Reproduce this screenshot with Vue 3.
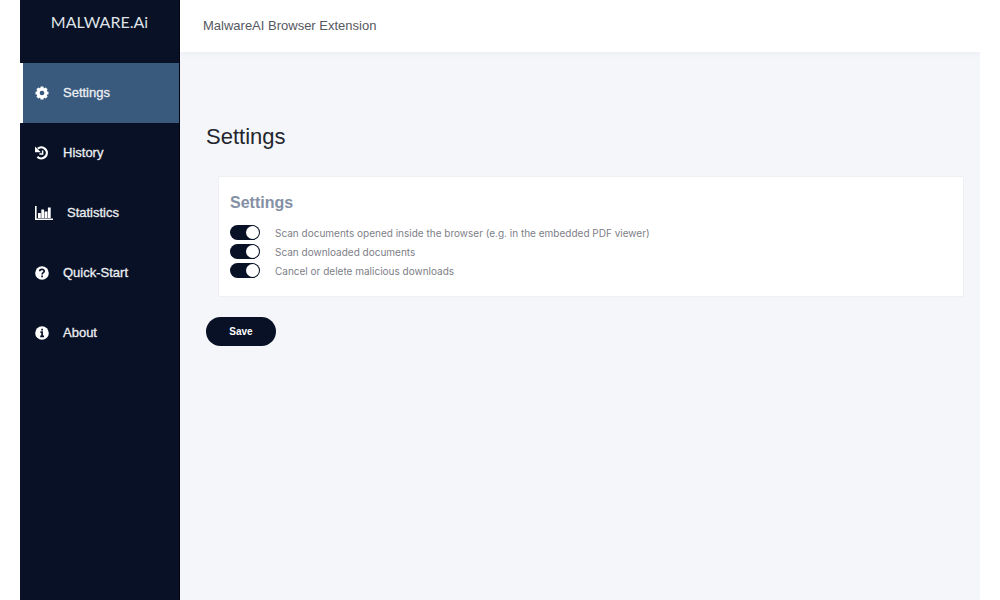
<script setup>
import { ref } from 'vue'

const items = [
  { id: 'settings', label: 'Settings' },
  { id: 'history', label: 'History' },
  { id: 'statistics', label: 'Statistics' },
  { id: 'quick-start', label: 'Quick-Start' },
  { id: 'about', label: 'About' },
]
const active = ref('settings')

const options = ref([
  { id: 'scan-opened', label: 'Scan documents opened inside the browser (e.g. in the embedded PDF viewer)', on: true },
  { id: 'scan-downloaded', label: 'Scan downloaded documents', on: true },
  { id: 'cancel-malicious', label: 'Cancel or delete malicious downloads', on: true },
])
</script>

<template>
  <div class="page">
    <aside class="sidebar">
      <div class="brand">MALWARE.Ai</div>
      <nav class="nav">
        <a
          v-for="item in items"
          :key="item.id"
          :href="'#' + item.id"
          class="nav-link"
          :class="{ active: active === item.id }"
          @click="active = item.id"
        >
          <svg v-if="item.id === 'settings'" class="icon" viewBox="0 0 14 14" aria-hidden="true">
            <g fill="currentColor">
              <rect v-for="n in 4" :key="n" x="5.4" y="0.5" width="3.2" height="13" rx="0.6" :transform="`rotate(${n * 45} 7 7)`" />
              <circle cx="7" cy="7" r="5.3" />
            </g>
            <circle class="hole" cx="7" cy="7" r="2.3" />
          </svg>
          <svg v-else-if="item.id === 'history'" class="icon" viewBox="0 0 14 14" aria-hidden="true">
            <path d="M2.8 2.7A5.5 5.5 0 1 1 2.4 10.8" fill="none" stroke="currentColor" stroke-width="2.3" />
            <path d="M0 0.4V6.2H5.8Z" fill="currentColor" />
            <path d="M7.6 4.6V8H4.4" fill="none" stroke="currentColor" stroke-width="1.5" />
          </svg>
          <svg v-else-if="item.id === 'statistics'" class="icon wide" viewBox="0 0 18 14" aria-hidden="true">
            <path d="M0.8 0V13.2H18" fill="none" stroke="currentColor" stroke-width="1.6" />
            <path d="M3 7h2.8v5H3zM6.3 3.5h2.8V12H6.3zM9.6 5.5h2.8V12H9.6zM12.9 1.5h2.8V12h-2.8z" fill="currentColor" />
          </svg>
          <svg v-else-if="item.id === 'quick-start'" class="icon" viewBox="0 0 14 14" aria-hidden="true">
            <circle cx="7" cy="7" r="6.8" fill="currentColor" />
            <path class="cut" d="M4.7 5.2C4.8 2.8 9.4 2.9 9.2 5.3C9.1 6.7 7.1 6.7 7.1 8.4" />
            <path class="cut" d="M7.1 9.5V11.3" />
          </svg>
          <svg v-else class="icon" viewBox="0 0 14 14" aria-hidden="true">
            <circle cx="7" cy="7" r="6.8" fill="currentColor" />
            <path class="cut" d="M7.1 2.7V4.5M5.4 6.2H7.1V10.4M5.2 10.4H9" />
          </svg>
          <span>{{ item.label }}</span>
        </a>
      </nav>
    </aside>

    <div class="body">
      <header class="topbar">MalwareAI Browser Extension</header>
      <main class="content">
        <h1>Settings</h1>
        <form @submit.prevent>
          <section class="card">
            <h2>Settings</h2>
            <div v-for="option in options" :key="option.id" class="option">
              <input :id="option.id" v-model="option.on" class="switch" type="checkbox" />
              <label :for="option.id">{{ option.label }}</label>
            </div>
          </section>
          <button class="save" type="submit">Save</button>
        </form>
      </main>
    </div>
  </div>
</template>

<style>
body {
  background: #fff;
}
</style>

<style scoped>
.page {
  display: flex;
  min-height: 100vh;
  margin: 0 20px;
  font-family: "Liberation Sans", Arial, sans-serif;
  background: #f5f6fa;
}

.sidebar {
  flex: none;
  width: 160px;
  box-sizing: border-box;
  border-right: 1px solid #03060f;
  background: #081125;
  color: #fff;
}

.brand {
  height: 63px;
  padding-top: 12px;
  box-sizing: border-box;
  font: 16px/20px Lato, sans-serif;
  text-align: center;
  color: #dfe1e6;
}

.nav-link {
  display: flex;
  align-items: center;
  gap: 14px;
  height: 60px;
  padding-left: 15px;
  font-size: 13px;
  line-height: 20px;
  -webkit-text-stroke: 0.3px currentColor;
  color: #eceef2;
  text-decoration: none;
}

.nav-link.active {
  padding-left: 12px;
  border-left: 3px solid #fff;
  background: #395a7d;
}

.icon {
  flex: none;
  width: 14px;
  height: 14px;
  color: #fff;
}

.icon.wide {
  width: 18px;
}

.hole {
  fill: #395a7d;
}

.cut {
  fill: none;
  stroke: #081125;
  stroke-width: 1.7;
}

.body {
  flex: 1;
  min-width: 0;
  overflow: hidden;
}

.topbar {
  height: 52px;
  padding: 0 23px;
  font-size: 13px;
  line-height: 52px;
  color: #55585f;
  background: #fff;
  box-shadow: 0 1px 6px #e9ebf0;
}

.content {
  padding: 70px 16px 0 26px;
}

h1 {
  margin: 0;
  font-size: 22px;
  font-weight: 400;
  line-height: 30px;
  color: #24262e;
}

.card {
  margin: 24px 0 20px 12px;
  padding: 16px 11px;
  border: 1px solid #eef0f4;
  background: #fff;
}

h2 {
  margin: 0 0 10px;
  font-size: 16px;
  font-weight: 700;
  line-height: 20px;
  color: #8490a5;
}

.option {
  display: flex;
  align-items: center;
  gap: 15px;
  height: 19px;
  font-family: Inter, "Liberation Sans", sans-serif;
  font-size: 10px;
  color: #7d8087;
}

.switch {
  display: flex;
  align-items: center;
  justify-content: flex-end;
  flex: none;
  width: 30px;
  height: 15px;
  margin: 0;
  padding: 1px;
  box-sizing: border-box;
  border-radius: 8px;
  appearance: none;
  background: #081125;
}

.switch::before {
  content: "";
  width: 13px;
  height: 13px;
  border-radius: 50%;
  background: #fff;
}

.switch:not(:checked) {
  justify-content: flex-start;
  background: #9aa1ae;
}

.save {
  display: block;
  width: 70px;
  height: 29px;
  padding: 0;
  border: 0;
  border-radius: 15px;
  font: 700 10px/20px "Liberation Sans", Arial, sans-serif;
  color: #fff;
  background: #081125;
}
</style>
